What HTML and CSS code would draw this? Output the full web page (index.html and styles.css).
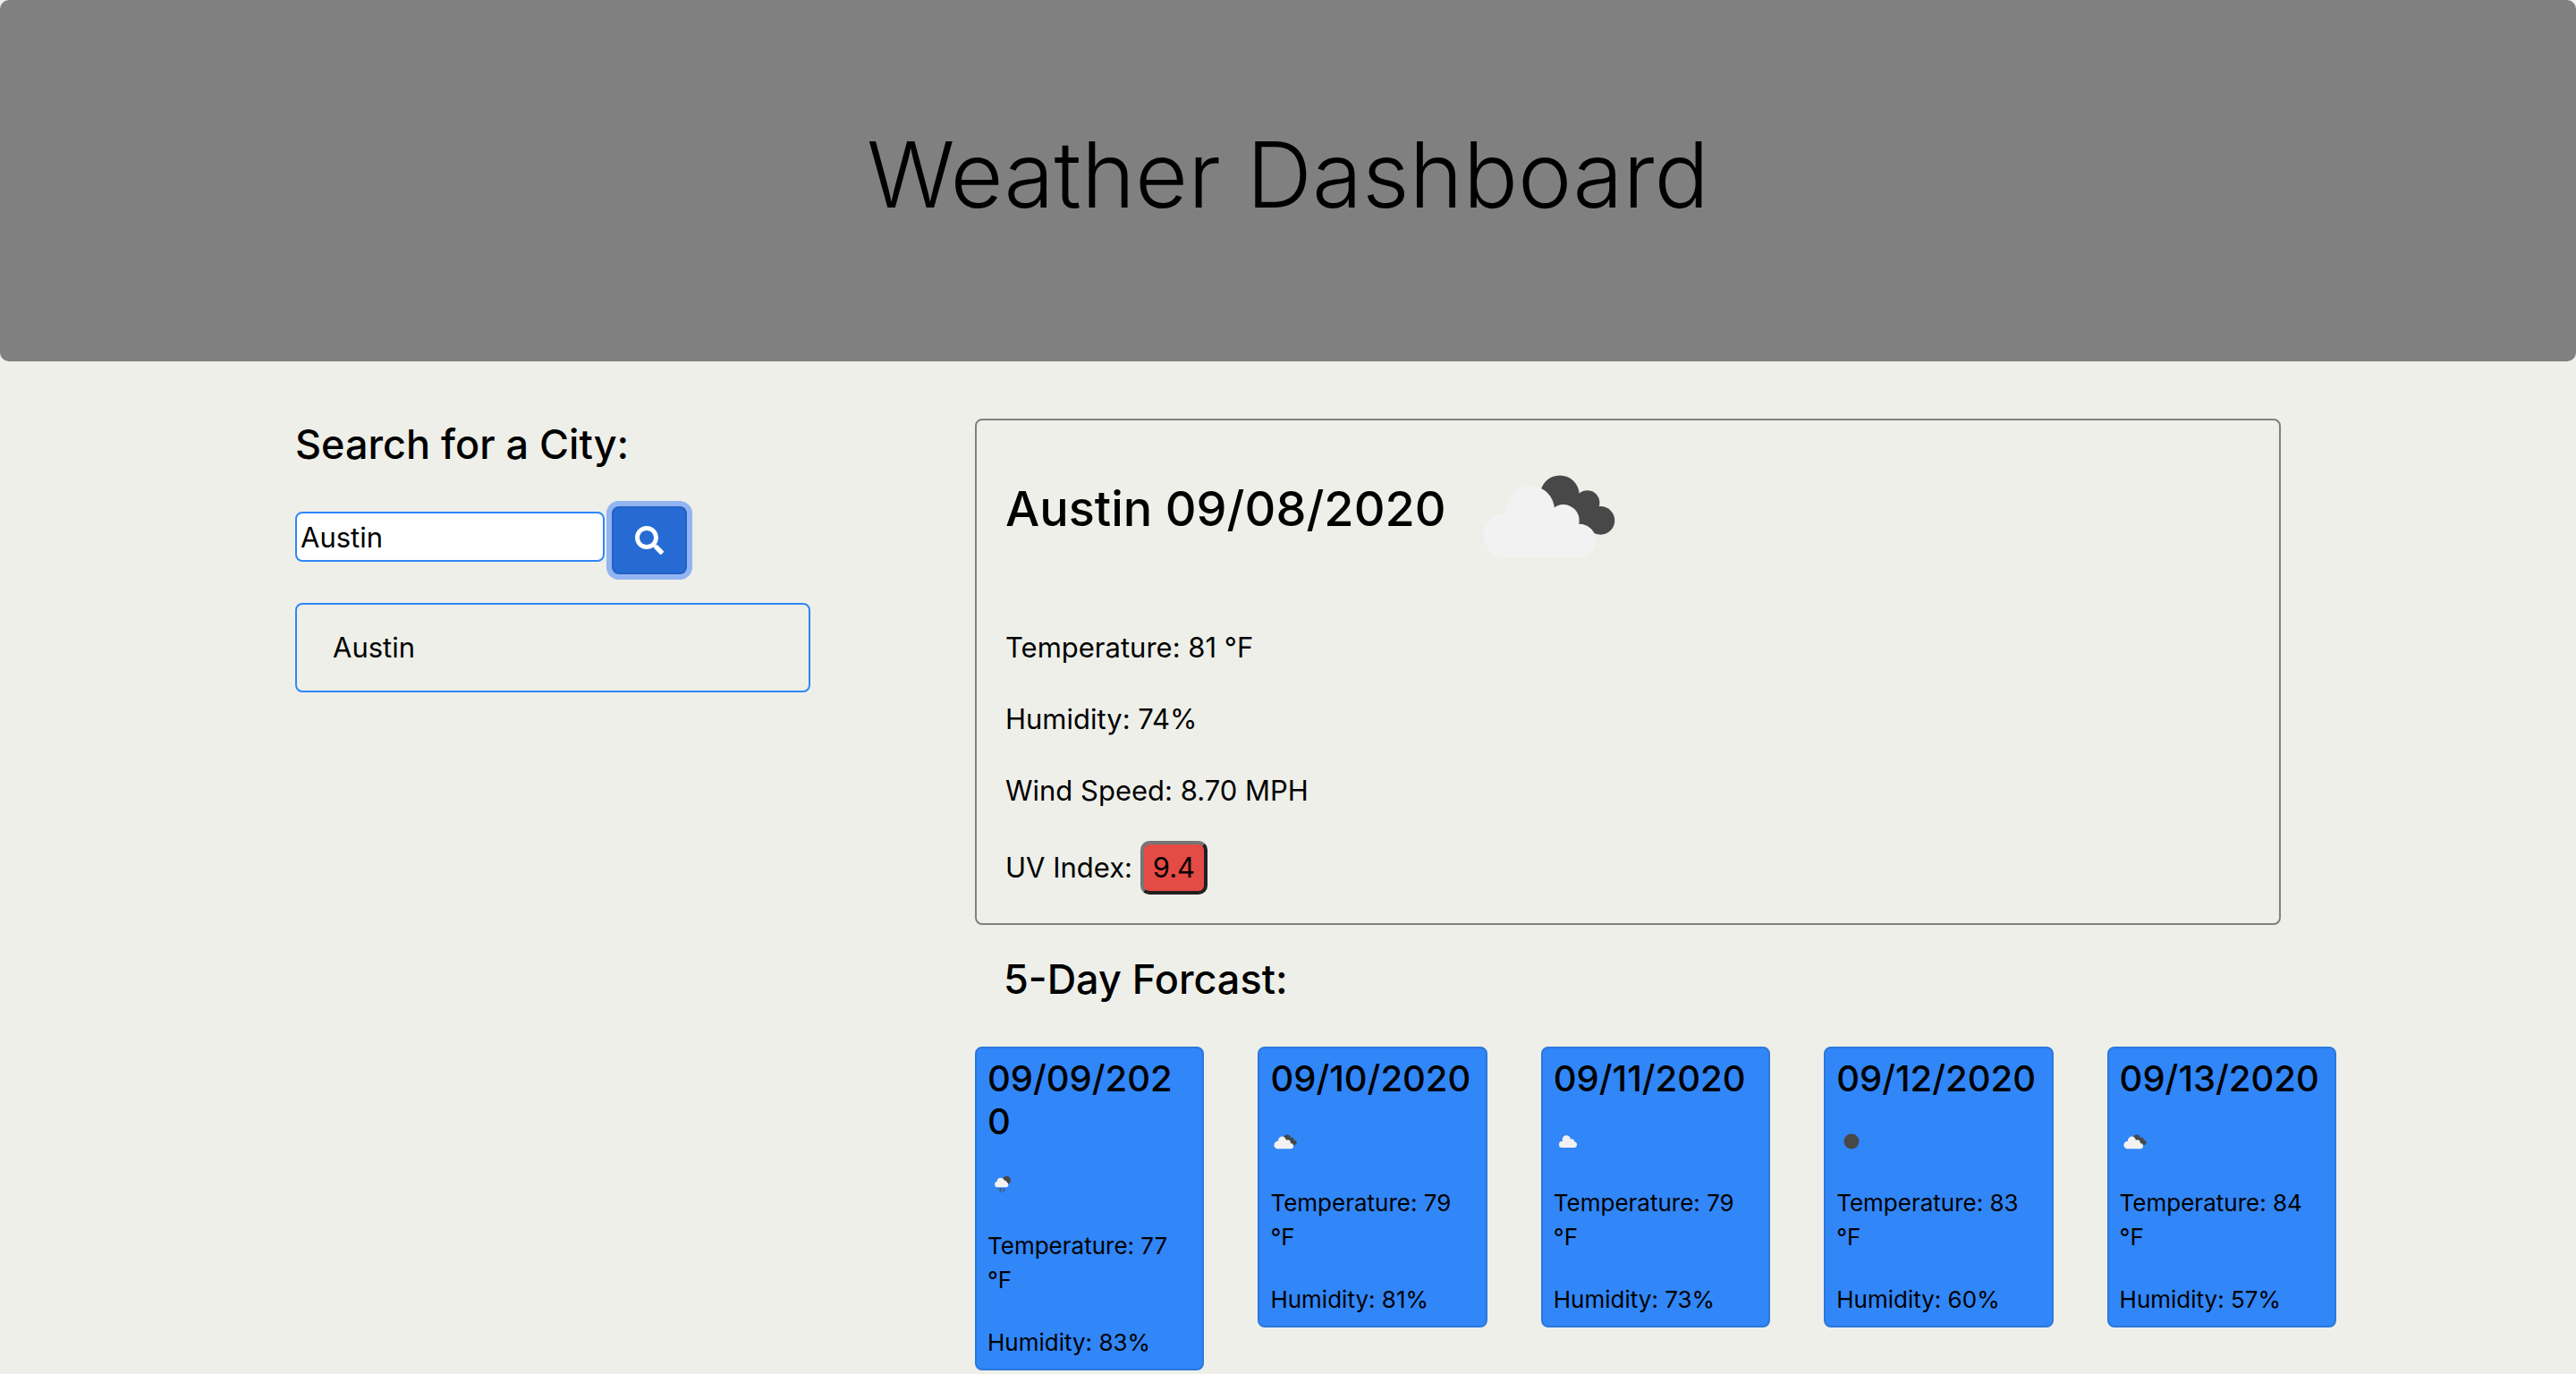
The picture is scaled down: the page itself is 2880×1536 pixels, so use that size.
FILE: index.html
```
<!DOCTYPE html>
<html lang="en">
<head>
<meta charset="utf-8">
<title>Weather Dashboard</title>
<link rel="stylesheet" href="styles.css">
</head>
<body>
<svg class="sprite" aria-hidden="true">
  <symbol id="cloud" viewBox="0 0 200 200">
    <g fill="#f2f2f2"><circle cx="56" cy="126" r="21"/><circle cx="84" cy="93" r="27"/><circle cx="118" cy="108" r="18"/><circle cx="133" cy="127" r="20"/><path d="M56 147V110l28-10 34 8 15 39z"/></g>
  </symbol>
  <symbol id="broken" viewBox="0 0 200 200">
    <g fill="#484848"><circle cx="112" cy="84" r="22"/><circle cx="143" cy="93" r="14"/><circle cx="158" cy="113" r="16"/><path d="M112 84l31 9 15 20-7 14-40-8z"/></g>
    <g fill="#f2f2f2"><circle cx="51" cy="130" r="25"/><circle cx="79" cy="101" r="27"/><circle cx="116" cy="113" r="18"/><circle cx="134" cy="136" r="19"/><path d="M51 155v-45h65l18 45z"/></g>
  </symbol>
  <symbol id="rain" viewBox="0 0 200 200">
    <circle cx="125" cy="80" r="28" fill="#484848"/>
    <g fill="#f2f2f2"><circle cx="67" cy="106" r="19"/><circle cx="87" cy="87" r="24"/><circle cx="109" cy="97" r="18"/><circle cx="120" cy="108" r="17"/><path d="M67 125V95h50l3 30z"/></g>
    <path stroke="#484848" stroke-width="6" d="M76 130l-3 10M88 130l-6 24M102 130l-4 10M114 132l-6 20M96 150l-3 10"/>
  </symbol>
  <symbol id="clear" viewBox="0 0 200 200"><circle cx="100" cy="106" r="50" fill="#484848"/></symbol>
</svg>
<header class="hero"><h1>Weather Dashboard</h1></header>
<main class="container">
  <aside class="search">
    <h2><label for="city">Search for a City:</label></h2>
    <form class="search-form">
      <input id="city" type="text" value="Austin">
      <button type="button" class="search-btn" aria-label="Search"><svg viewBox="0 0 512 512"><path fill="currentColor" d="M505 442.700L405.300 343c-4.500-4.500-10.600-7-17-7H372c27.600-35.300 44-79.700 44-128C416 93.100 322.900 0 208 0S0 93.100 0 208s93.100 208 208 208c48.300 0 92.700-16.400 128-44v16.300c0 6.400 2.500 12.500 7 17l99.700 99.700c9.400 9.400 24.600 9.400 33.900 0l28.300-28.300c9.400-9.400 9.400-24.600.1-34zM208 336c-70.700 0-128-57.200-128-128 0-70.700 57.200-128 128-128 70.700 0 128 57.200 128 128 0 70.700-57.200 128-128 128z"/></svg></button>
    </form>
    <button type="button" class="history">Austin</button>
  </aside>
  <div class="results">
    <section class="current">
      <div class="current-head"><h2>Austin 09/08/2020</h2><svg><use href="#broken"/></svg></div>
      <p>Temperature: 81 °F</p>
      <p>Humidity: 74%</p>
      <p>Wind Speed: 8.70 MPH</p>
      <p class="uv">UV Index: <button type="button">9.4</button></p>
    </section>
    <h2 class="forecast-title">5-Day Forcast:</h2>
    <section class="forecast">
      <article><h3>09/09/2020</h3><svg><use href="#rain"/></svg><p>Temperature: 77 °F</p><p>Humidity: 83%</p></article>
      <article><h3>09/10/2020</h3><svg><use href="#broken"/></svg><p>Temperature: 79 °F</p><p>Humidity: 81%</p></article>
      <article><h3>09/11/2020</h3><svg><use href="#cloud"/></svg><p>Temperature: 79 °F</p><p>Humidity: 73%</p></article>
      <article><h3>09/12/2020</h3><svg><use href="#clear"/></svg><p>Temperature: 83 °F</p><p>Humidity: 60%</p></article>
      <article><h3>09/13/2020</h3><svg><use href="#broken"/></svg><p>Temperature: 84 °F</p><p>Humidity: 57%</p></article>
    </section>
  </div>
</main>
</body>
</html>
```
FILE: styles.css
```
* { box-sizing: border-box; }
body { margin: 0; background: #eeefe9; color: #000; font: 31px/48px Inter, "Liberation Sans", sans-serif; }
h1, h2, h3, p { margin: 0; }
h2 { font-size: 45px; font-weight: 500; line-height: 58px; }
button, input { font: inherit; color: inherit; }
.sprite { display: none; }
.hero { background: gray; border-radius: 10px; padding: 128px 64px 142px; text-align: center; }
.hero h1 { font-size: 102px; font-weight: 300; line-height: 134px; }
.container { width: 2220px; max-width: 100%; margin: 64px auto 0; display: grid; grid-template-columns: 576px minmax(0, 1fr); column-gap: 184px; align-items: start; }
.search-form { display: flex; align-items: flex-start; gap: 8px; margin: 40px 0 32px; }
.search-form input { width: 346px; height: 56px; margin-top: 6px; padding: 0 4px; border: 2px solid #2f86f8; border-radius: 8px; background: #fff; }
.search-btn { width: 84px; height: 76px; padding: 0; border: 2px solid #2260c4; border-radius: 8px; background: #266bd3; color: #fff; box-shadow: 0 0 0 6px #92b5f2; display: grid; place-items: center; }
.search-btn svg { width: 32px; height: 32px; }
.history { display: block; width: 100%; height: 100px; padding: 0 40px; text-align: left; border: 2px solid #2f86f8; border-radius: 8px; background: none; }
.current { border: 2px solid gray; border-radius: 8px; padding: 0 32px 32px; display: grid; row-gap: 32px; }
.current-head { display: flex; align-items: center; gap: 16px; }
.current-head h2 { font-size: 54px; }
.current-head svg { width: 198px; height: 198px; }
.uv button { height: 60px; padding: 0 10px; border: 4px outset #767676; border-radius: 10px; background: #e44b44; }
.forecast-title { padding-left: 32px; margin: 32px 0 46px; }
.forecast { display: grid; grid-template-columns: repeat(5, 1fr); gap: 60px; margin-right: -62px; align-items: start; }
.forecast article { background: #3186f8; border: 2px solid #2c77dc; border-radius: 8px; padding: 10px 12px; }
.forecast h3 { font-size: 40px; line-height: 48px; font-weight: 500; overflow-wrap: anywhere; }
.forecast svg { display: block; width: 34px; height: 34px; margin: 28px 0 34px; }
.forecast p { font-size: 26px; line-height: 38px; }
.forecast p + p { margin-top: 32px; }
```
